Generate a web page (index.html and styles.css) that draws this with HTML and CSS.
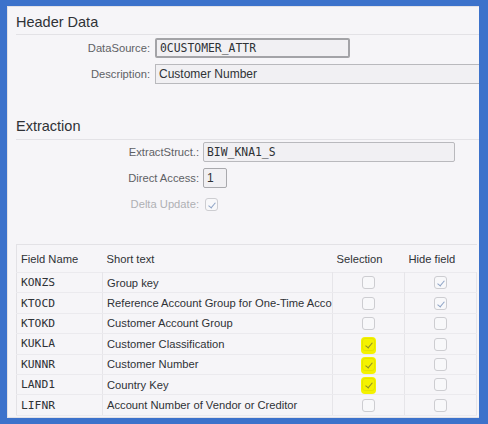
FILE: index.html
```html
<!DOCTYPE html>
<html lang="en">
  <head>
    <meta charset="UTF-8" />
    <title>DataSource</title>
    <link rel="stylesheet" href="styles.css">
  </head>
  <body>
    <div class="panel">
      <h2 class="section-title">Header Data</h2>
      <div class="form form-header">
        <label>DataSource:</label>
        <div class="field field-source mono">0CUSTOMER_ATTR</div>
        <label>Description:</label>
        <div class="field field-desc">Customer Number</div>
      </div>

      <h2 class="section-title title-extract">Extraction</h2>
      <div class="form form-extract">
        <label>ExtractStruct.:</label>
        <div class="field field-struct mono">BIW_KNA1_S</div>
        <label>Direct Access:</label>
        <div class="field field-access">1</div>
        <label class="disabled">Delta Update:</label>
        <div class="check-cell"><span class="cb checked"></span></div>
      </div>

      <table class="fields">
        <colgroup>
          <col class="c-name"><col class="c-text"><col class="c-sel"><col class="c-hide">
        </colgroup>
        <thead>
          <tr><th>Field Name</th><th>Short text</th><th>Selection</th><th>Hide field</th></tr>
        </thead>
        <tbody>
          <tr><td class="mono">KONZS</td><td>Group key</td><td class="c"><span class="cb"></span></td><td class="c"><span class="cb checked"></span></td></tr>
          <tr><td class="mono">KTOCD</td><td>Reference Account Group for One-Time Acco</td><td class="c"><span class="cb"></span></td><td class="c"><span class="cb checked"></span></td></tr>
          <tr><td class="mono">KTOKD</td><td>Customer Account Group</td><td class="c"><span class="cb"></span></td><td class="c"><span class="cb"></span></td></tr>
          <tr><td class="mono">KUKLA</td><td>Customer Classification</td><td class="c"><span class="cb checked hl"></span></td><td class="c"><span class="cb"></span></td></tr>
          <tr><td class="mono">KUNNR</td><td>Customer Number</td><td class="c"><span class="cb checked hl"></span></td><td class="c"><span class="cb"></span></td></tr>
          <tr><td class="mono">LAND1</td><td>Country Key</td><td class="c"><span class="cb checked hl"></span></td><td class="c"><span class="cb"></span></td></tr>
          <tr><td class="mono">LIFNR</td><td>Account Number of Vendor or Creditor</td><td class="c"><span class="cb"></span></td><td class="c"><span class="cb"></span></td></tr>
        </tbody>
      </table>
    </div>
  </body>
</html>
```

FILE: styles.css
```css
* {
  box-sizing: border-box;
}

html,
body {
  margin: 0;
  height: 424px;
  overflow: hidden;
}

body {
  background: #3c72cb;
  padding: 6px 9px 6px 7px;
  font-family: "Liberation Sans", Arial, sans-serif;
  color: #2f3236;
}

.panel {
  height: 412px;
  background: #f6f5f8;
  border: 1px solid #e2e1e6;
  border-right: 0;
  padding: 5px 0 0 8px;
  overflow: hidden;
}

.mono {
  font-family: "DejaVu Sans Mono", "Liberation Mono", monospace;
  font-size: 11.3px;
}

.section-title {
  margin: 0;
  font-size: 14.5px;
  font-weight: normal;
  line-height: 20px;
  padding-bottom: 2px;
  border-bottom: 1px solid #e3e2e6;
}

.title-extract {
  margin-top: 32px;
  padding-bottom: 3px;
}

.form {
  display: grid;
  row-gap: 6px;
  align-items: center;
}

.form-header {
  grid-template-columns: 134px 1fr;
  column-gap: 5px;
  margin-top: 3px;
}

.form-extract {
  grid-template-columns: 183px 1fr;
  column-gap: 4px;
  margin-top: 2px;
}

.form label {
  text-align: right;
  font-size: 11.2px;
  color: #5e6165;
  line-height: 20px;
}

.form label.disabled {
  color: #afb0b4;
}

.field {
  height: 20px;
  line-height: 18px;
  padding: 0 3px;
  font-size: 12px;
  background: #f1f0f3;
  border: 1px solid #b9b9bd;
  border-radius: 2px;
  white-space: nowrap;
}

.field-source {
  width: 195px;
  line-height: 16px;
  border: 2px solid #a3a3a7;
  font-size: 11.4px;
}

.field-desc {
  border-right: 0;
  border-radius: 0;
}

.field-struct {
  width: 252px;
  font-size: 11.4px;
}

.field-access {
  width: 24px;
  border-color: #a9a9ad;
}

.check-cell {
  height: 20px;
  display: flex;
  align-items: center;
  padding-left: 2px;
}

.cb {
  display: inline-block;
  position: relative;
  width: 13px;
  height: 13px;
  border: 1px solid #cdcdd1;
  border-radius: 3px;
  background: #f8f8fa;
  vertical-align: middle;
}

.cb.checked::after {
  content: "";
  position: absolute;
  left: 4px;
  top: 2px;
  width: 3px;
  height: 6px;
  border-right: 1px solid #8ea3c6;
  border-bottom: 1px solid #8ea3c6;
  transform: rotate(40deg);
}

.cb.hl {
  background: #f4f200;
  border-color: #e6e400;
  box-shadow: 0 0 0 1px #f4f200, 0 2px 0 1px #f4f200;
}

.cb.hl::after {
  border-color: #8c8a2c;
}

.fields {
  margin-top: 30px;
  width: 460px;
  border-collapse: collapse;
  table-layout: fixed;
  font-size: 11.2px;
  border-top: 1px solid #e3e2e6;
  border-left: 1px solid #e3e2e6;
}

.c-name { width: 86px; }
.c-text { width: 230px; }
.c-sel { width: 72px; }
.c-hide { width: 72px; }

.fields th {
  height: 28px;
  text-align: left;
  font-weight: normal;
  padding: 0 4px;
}

.fields td {
  height: 20.4px;
  padding: 0 4px;
  border-top: 1px solid #ebeaee;
  border-right: 1px solid #e6e5e9;
  border-bottom: 1px solid #ebeaee;
  white-space: nowrap;
  overflow: hidden;
}

.fields td.c {
  text-align: center;
  padding: 0;
}
```
